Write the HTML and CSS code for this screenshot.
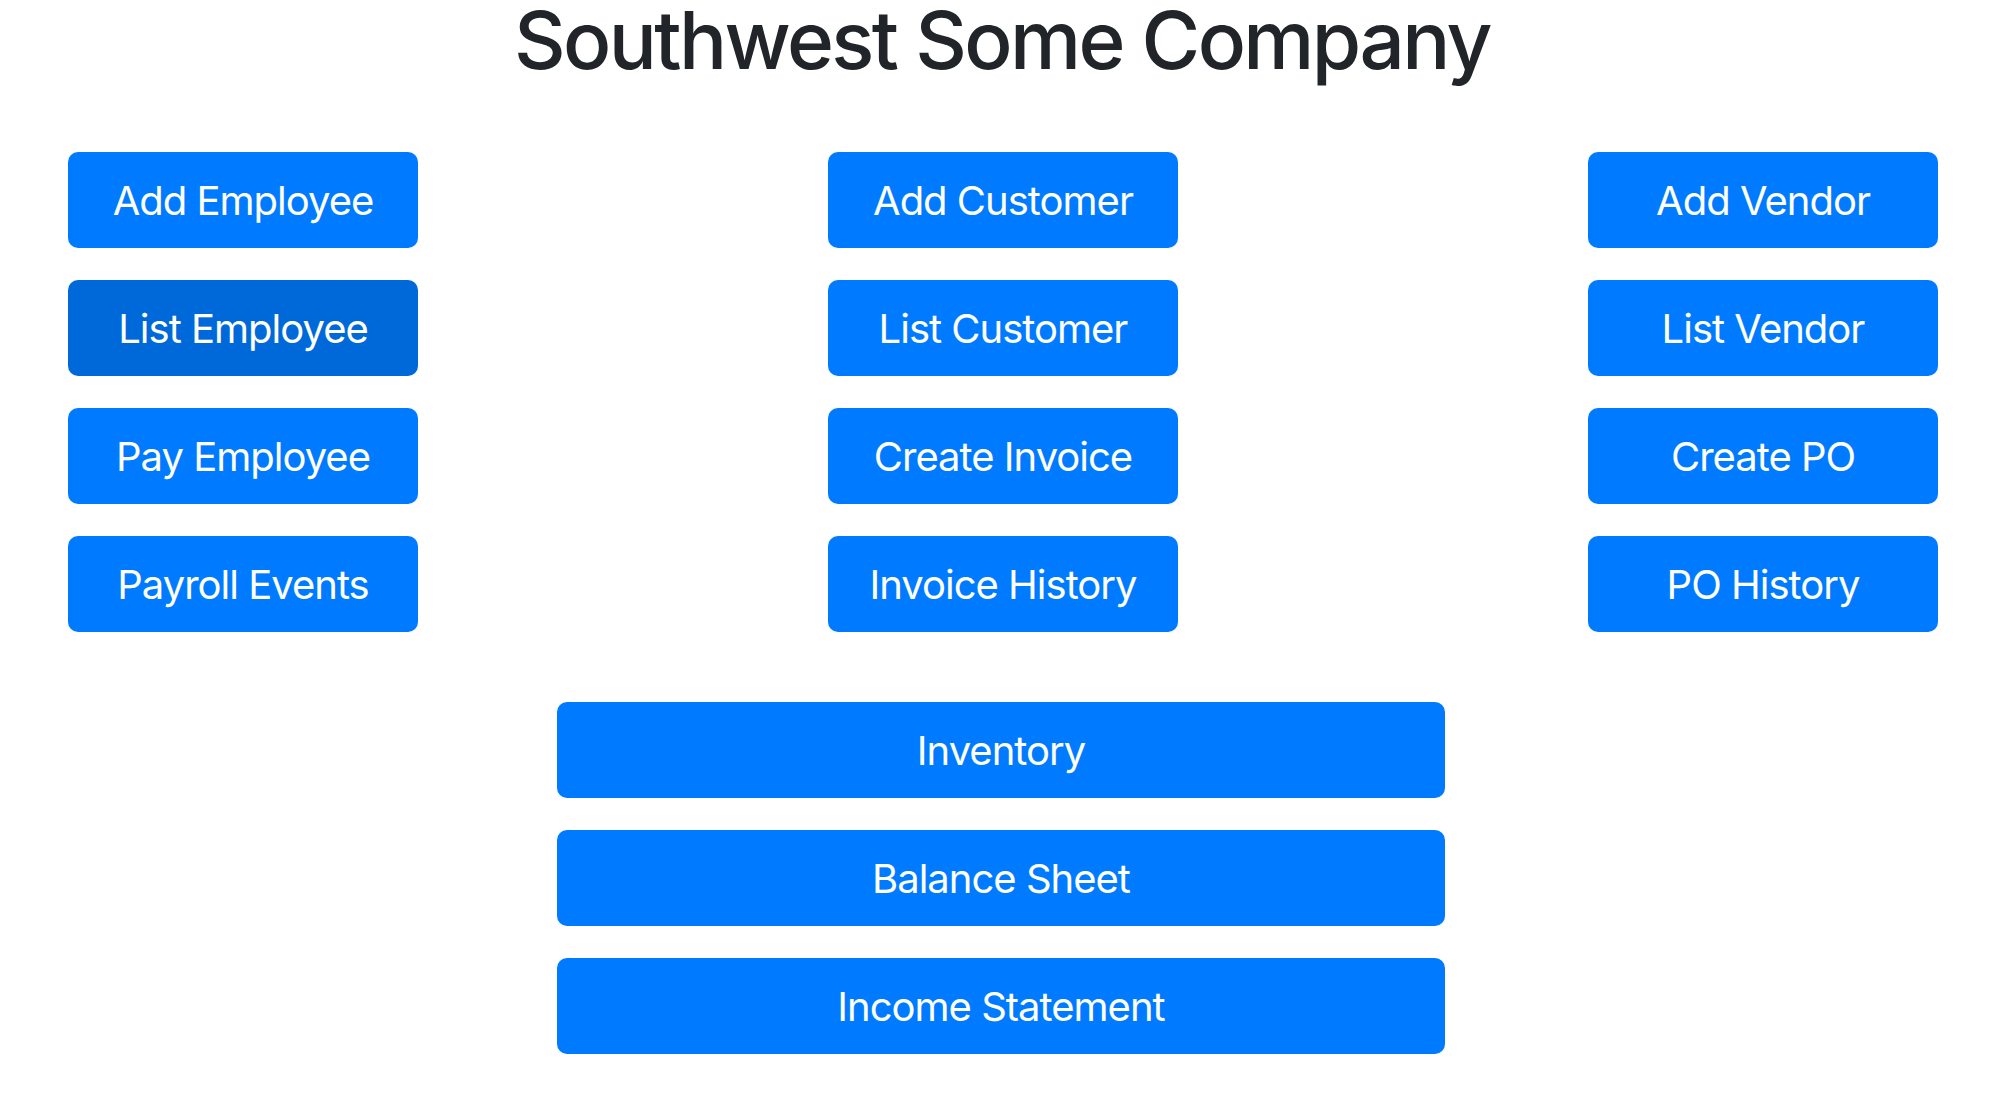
FILE: index.html
```html
<!DOCTYPE html>
<html lang="en">
<head>
<meta charset="utf-8">
<title>Southwest Some Company</title>
<link rel="stylesheet" href="styles.css">
</head>
<body>
<h1 class="title">Southwest Some Company</h1>
<div class="grid">
  <div class="col">
    <a class="btn" href="#">Add Employee</a>
    <a class="btn btn-active" href="#">List Employee</a>
    <a class="btn" href="#">Pay Employee</a>
    <a class="btn" href="#">Payroll Events</a>
  </div>
  <div class="col">
    <a class="btn" href="#">Add Customer</a>
    <a class="btn" href="#">List Customer</a>
    <a class="btn" href="#">Create Invoice</a>
    <a class="btn" href="#">Invoice History</a>
  </div>
  <div class="col">
    <a class="btn" href="#">Add Vendor</a>
    <a class="btn" href="#">List Vendor</a>
    <a class="btn" href="#">Create PO</a>
    <a class="btn" href="#">PO History</a>
  </div>
</div>
<div class="wide">
  <a class="btn btn-wide" href="#">Inventory</a>
  <a class="btn btn-wide" href="#">Balance Sheet</a>
  <a class="btn btn-wide" href="#">Income Statement</a>
</div>
</body>
</html>
```

FILE: styles.css
```css
html, body {
  margin: 0;
  padding: 0;
  background: #ffffff;
}
body {
  font-family: Inter, "Noto Sans", "Liberation Sans", sans-serif;
  color: #212529;
}
.title {
  margin: 0 0 72px 0;
  text-align: center;
  font-size: 80px;
  font-weight: 500;
  line-height: 80px;
  letter-spacing: -2.6px;
}
.grid {
  display: flex;
  justify-content: space-between;
  padding: 0 66px 0 68px;
}
.col {
  display: flex;
  flex-direction: column;
  gap: 32px;
}
.btn {
  display: flex;
  align-items: center;
  justify-content: center;
  box-sizing: border-box;
  width: 350px;
  height: 96px;
  border-radius: 10px;
  background: #007bff;
  color: #ffffff;
  font-size: 40px;
  font-weight: 400;
  text-decoration: none;
  letter-spacing: -1px;
}
.btn-active {
  background: #0069d9;
}
.wide {
  display: flex;
  flex-direction: column;
  align-items: center;
  gap: 32px;
  margin-top: 70px;
  padding-right: 2px;
}
.btn-wide {
  width: 888px;
}
```
